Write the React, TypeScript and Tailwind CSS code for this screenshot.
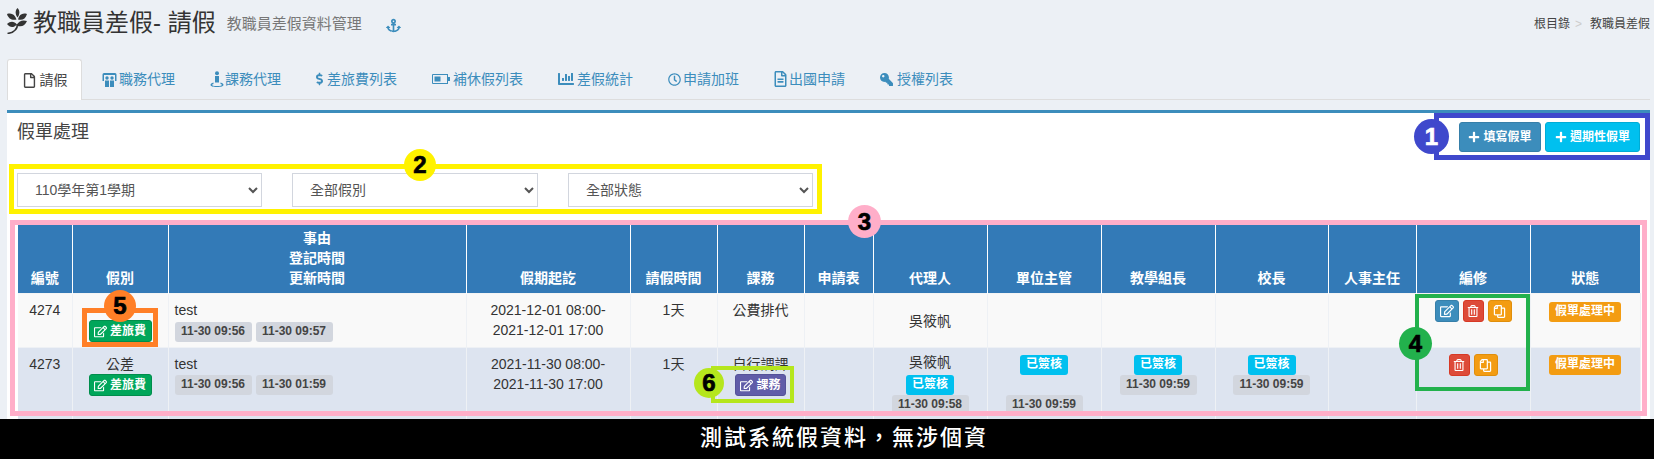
import type { ReactNode } from "react";
import {
  FaAnchor,
  FaChartBar,
  FaDollarSign,
  FaKey,
  FaPlus,
  FaRegClock,
  FaRegCopy,
  FaRegEdit,
  FaRegFile,
  FaRegFileAlt,
  FaRegTrashAlt,
} from "react-icons/fa";

function GrainIcon() {
  return (
    <svg viewBox="0 0 20 26" className="h-[26px] w-[20px] text-[#333]" fill="currentColor">
      <path d="M10.500 0c2.500 2.500 2.500 6 0 9.500-2.500-3.500-2.500-7 0-9.500z" />
      <path d="M0 6c4.500-1.500 8 .5 9.500 5.500C5 12.500 1.500 11 0 6z" />
      <path d="M20 6c-4.500-1.500-8 .5-9 5.500 4.500 1 7.500-.5 9-5.500z" />
      <path d="M0 16c3.500-3 7-3 10 .5-3.500 3.500-7 3.500-10-.5z" />
      <path d="M20 13c-4.500-1.500-8.500 0-10.500 4.500C14 19.500 18 18 20 13z" />
      <path d="M10.500 16c0 5-3.500 8.500-10 9.500" fill="none" stroke="currentColor" strokeWidth="1.600" />
    </svg>
  );
}

function DeputyIcon() {
  return (
    <svg viewBox="0 0 15 15" className="h-[15px] w-[15px]" fill="currentColor">
      <path d="M2 1h11a1.500 1.500 0 0 1 1.500 1.500V9h-1.500V3H2v6H.5V2.500A1.500 1.500 0 0 1 2 1z" />
      <circle cx="5" cy="6" r="1.700" />
      <circle cx="10" cy="6" r="1.700" />
      <path d="M3 8.500h4V15H3zM8 8.500h4V15H8z" />
    </svg>
  );
}

function CourseIcon() {
  return (
    <svg viewBox="0 0 14 16" className="h-[16px] w-[14px]" fill="currentColor">
      <circle cx="7" cy="2.300" r="2" />
      <path d="M5 5h4v6.500H5z" />
      <path d="M3.500 11.500c-2 .5-3 1.500-3 2.500s2 2 6.500 2 6.500-1 6.500-2-1-2-3-2.500v1.500c1 .2 1.500.6 1.500 1s-1.500 1-5 1-5-.5-5-1 .5-.8 1.500-1z" />
    </svg>
  );
}

function BatteryIcon() {
  return (
    <svg viewBox="0 0 18 10" className="h-[10px] w-[18px]" fill="currentColor">
      <path d="M1 0h15v3h2v4h-2v3H1a1 1 0 0 1-1-1V1a1 1 0 0 1 1-1zm0 1v8h14V1z" />
      <path d="M2.500 2.500h6v5h-6z" />
    </svg>
  );
}

const tabs: { label: string; icon: ReactNode; box: string }[] = [
  { label: "職務代理", icon: <DeputyIcon />, box: "w-[17px]" },
  { label: "課務代理", icon: <CourseIcon />, box: "w-[15px]" },
  { label: "差旅費列表", icon: <FaDollarSign className="h-[14px] w-[7px]" />, box: "w-[11px]" },
  { label: "補休假列表", icon: <BatteryIcon />, box: "w-[21px]" },
  { label: "差假統計", icon: <FaChartBar size={16} />, box: "w-[19px]" },
  { label: "申請加班", icon: <FaRegClock size={13} />, box: "w-[15px]" },
  { label: "出國申請", icon: <FaRegFileAlt className="h-[16px] w-[13px]" />, box: "w-[15px]" },
  { label: "授權列表", icon: <FaKey size={13} className="-scale-x-100" />, box: "w-[17px]" },
];

function TimeLabel({ children }: { children: ReactNode }) {
  return (
    <span className="mx-auto block h-[20px] w-[77px] rounded-[3px] bg-[#d2d6de] text-center text-[12px] leading-[18px] font-bold text-[#444]">
      {children}
    </span>
  );
}

function SignedBadge() {
  return (
    <span className="mx-auto block h-[20px] w-[48px] rounded-[3px] bg-[#00c0ef] text-center text-[12px] leading-[18px] font-bold text-white">
      已簽核
    </span>
  );
}

function StatusBadge() {
  return (
    <span className="mx-auto block h-[20px] w-[72px] rounded-[3px] bg-[#f39c12] text-center text-[12px] leading-[18px] font-bold text-white">
      假單處理中
    </span>
  );
}

function TravelButton() {
  return (
    <span className="mx-auto flex h-[22px] w-[63px] items-center justify-center gap-[3px] rounded-[3px] border border-[#008d4c] bg-[#00a65a] text-[12px] font-bold text-white">
      <FaRegEdit size={13} />
      差旅費
    </span>
  );
}

function ActionButtons({ edit }: { edit?: boolean }) {
  return (
    <div className="flex justify-center gap-[4px]">
      {edit && (
        <span className="flex h-[22px] w-[24px] items-center justify-center rounded-[3px] border border-[#367fa9] bg-[#3c8dbc] text-white">
          <FaRegEdit size={14} />
        </span>
      )}
      <span className="flex h-[22px] w-[21px] items-center justify-center rounded-[3px] border border-[#d73925] bg-[#dd4b39] text-white">
        <FaRegTrashAlt size={12} />
      </span>
      <span className="flex h-[22px] w-[24px] items-center justify-center rounded-[3px] border border-[#e08e0b] bg-[#f39c12] text-white">
        <FaRegCopy size={13} className="-scale-x-100" />
      </span>
    </div>
  );
}

const headers: { label: ReactNode; width: string }[] = [
  { label: "編號", width: "w-[54px]" },
  { label: "假別", width: "w-[96px]" },
  {
    label: (
      <>
        事由
        <br />
        登記時間
        <br />
        更新時間
      </>
    ),
    width: "w-[298px]",
  },
  { label: "假期起訖", width: "w-[164px]" },
  { label: "請假時間", width: "w-[87px]" },
  { label: "課務", width: "w-[87px]" },
  { label: "申請表", width: "w-[69px]" },
  { label: "代理人", width: "w-[114px]" },
  { label: "單位主管", width: "w-[114px]" },
  { label: "教學組長", width: "w-[114px]" },
  { label: "校長", width: "w-[113px]" },
  { label: "人事主任", width: "w-[88px]" },
  { label: "編修", width: "w-[114px]" },
  { label: "狀態", width: "w-[110px]" },
];

function Cell({ children, left }: { children?: ReactNode; left?: boolean }) {
  return (
    <td
      className={`border-r border-[#eef1f5] pt-[6px] pb-[5px] align-top ${
        left ? "pl-[6px] text-left" : "text-center"
      }`}
    >
      {children}
    </td>
  );
}

function Mark({ className, children }: { className: string; children: ReactNode }) {
  return (
    <div
      className={`absolute flex items-center justify-center rounded-full text-[24px] leading-none font-bold [-webkit-text-stroke:0.7px_currentColor] ${className}`}
    >
      {children}
    </div>
  );
}

export default function App() {
  return (
    <div className="relative h-[459px] w-[1654px] overflow-hidden bg-[#ecf0f5] [font-family:'Liberation_Sans','Noto_Sans_CJK_TC',sans-serif] text-[14px] leading-[20px] text-[#333]">
      <header className="flex h-[59px] items-start pt-[8px] pr-[4px] pl-[7px]">
        <GrainIcon />
        <h1 className="ml-[6px] text-[24px] leading-[30px]">教職員差假- 請假</h1>
        <span className="mt-[6px] ml-[11px] text-[15px] leading-[20px] text-[#777]">教職員差假資料管理</span>
        <FaAnchor size={15} className="mt-[10px] ml-[24px] text-[#3c8dbc]" />
        <div className="ml-auto flex gap-[5px] pt-[7px] text-[12px] leading-[18px] text-[#444]">
          <span>根目錄</span>
          <span className="mr-[3px] text-[#ccc]">&gt;</span>
          <span>教職員差假</span>
        </div>
      </header>

      <nav className="mr-[4px] ml-[7px] flex h-[41px] gap-[5px] border-b border-[#ddd]">
        <div className="flex h-[41px] w-[75px] items-center justify-center gap-[3px] rounded-t-[3px] border border-b-0 border-[#ddd] bg-white text-[#444]">
          <FaRegFile size={15} />
          請假
        </div>
        {tabs.map((tab) => (
          <div key={tab.label} className="flex h-[40px] items-center px-[15px] text-[#3c8dbc]">
            <span className={`flex-none ${tab.box}`}>{tab.icon}</span>
            {tab.label}
          </div>
        ))}
      </nav>

      <section className="mt-[10px] mr-[4px] ml-[7px] h-[400px] border-t-[3px] border-[#3c8dbc] bg-white">
        <div className="flex h-[60px] items-start justify-between pr-[10px] pl-[10px]">
          <h3 className="mt-[7px] text-[18px] leading-[24px] text-[#444]">假單處理</h3>
          <div className="mt-[9px] flex gap-[4px] text-[12px] font-bold text-white">
            <span className="flex h-[30px] w-[82px] items-center justify-center gap-[3px] rounded-[3px] border border-[#367fa9] bg-[#3c8dbc]">
              <FaPlus size={12} />
              填寫假單
            </span>
            <span className="flex h-[30px] w-[95px] items-center justify-center gap-[3px] rounded-[3px] border border-[#00acd6] bg-[#00c0ef]">
              <FaPlus size={12} />
              週期性假單
            </span>
          </div>
        </div>

        <div className="ml-[10px] flex gap-[30px]">
          <select className="h-[34px] w-[245px] border border-[#d2d6de] bg-white pl-[13px] text-[#555]">
            <option>110學年第1學期</option>
          </select>
          <select className="h-[34px] w-[246px] border border-[#d2d6de] bg-white pl-[13px] text-[#555]">
            <option>全部假別</option>
          </select>
          <select className="h-[34px] w-[245px] border border-[#d2d6de] bg-white pl-[13px] text-[#555]">
            <option>全部狀態</option>
          </select>
        </div>

        <table className="mt-[18px] ml-[11px] w-[1622px] table-fixed border-collapse">
          <colgroup>
            {headers.map((h, i) => (
              <col key={i} className={h.width} />
            ))}
          </colgroup>
          <thead>
            <tr className="bg-[#337ab7] text-white">
              {headers.map((h, i) => (
                <th
                  key={i}
                  className="border-r border-white pt-[3px] pb-[5px] text-center align-bottom font-bold last:border-r-0"
                >
                  {h.label}
                </th>
              ))}
            </tr>
          </thead>
          <tbody>
            <tr className="h-[54px] border-t border-[#f4f4f4] bg-[#f9f9f9]">
              <Cell>4274</Cell>
              <Cell>
                <div className="h-[20px]" />
                <TravelButton />
              </Cell>
              <Cell left>
                <div>test</div>
                <div className="mt-[2px] flex gap-[4px]">
                  <div>
                    <TimeLabel>11-30 09:56</TimeLabel>
                  </div>
                  <div>
                    <TimeLabel>11-30 09:57</TimeLabel>
                  </div>
                </div>
              </Cell>
              <Cell>
                2021-12-01 08:00-
                <br />
                2021-12-01 17:00
              </Cell>
              <Cell>1天</Cell>
              <Cell>公費排代</Cell>
              <Cell />
              <Cell>
                <div className="mt-[11px]">吳筱帆</div>
              </Cell>
              <Cell />
              <Cell />
              <Cell />
              <Cell />
              <Cell>
                <ActionButtons edit />
              </Cell>
              <Cell>
                <div className="mt-[2px]">
                  <StatusBadge />
                </div>
              </Cell>
            </tr>
            <tr className="border-t border-[#eef1f5] bg-[#dde4f0]">
              <Cell>4273</Cell>
              <Cell>
                <div>公差</div>
                <TravelButton />
              </Cell>
              <Cell left>
                <div>test</div>
                <div className="mt-[1px] flex gap-[4px]">
                  <div>
                    <TimeLabel>11-30 09:56</TimeLabel>
                  </div>
                  <div>
                    <TimeLabel>11-30 01:59</TimeLabel>
                  </div>
                </div>
              </Cell>
              <Cell>
                2021-11-30 08:00-
                <br />
                2021-11-30 17:00
              </Cell>
              <Cell>1天</Cell>
              <Cell>
                <div>自行調課</div>
                <span className="mx-auto flex h-[22px] w-[51px] items-center justify-center gap-[3px] rounded-[3px] border border-[#555299] bg-[#605ca8] text-[12px] font-bold text-white">
                  <FaRegEdit size={13} />
                  課務
                </span>
              </Cell>
              <Cell />
              <Cell>
                <div className="-mt-[2px]">吳筱帆</div>
                <div className="mt-[3px]">
                  <SignedBadge />
                </div>
                <TimeLabel>11-30 09:58</TimeLabel>
              </Cell>
              <Cell>
                <div className="mt-[1px]">
                  <SignedBadge />
                </div>
                <div className="h-[20px]" />
                <TimeLabel>11-30 09:59</TimeLabel>
              </Cell>
              <Cell>
                <div className="mt-[1px]">
                  <SignedBadge />
                </div>
                <TimeLabel>11-30 09:59</TimeLabel>
              </Cell>
              <Cell>
                <div className="mt-[1px]">
                  <SignedBadge />
                </div>
                <TimeLabel>11-30 09:59</TimeLabel>
              </Cell>
              <Cell />
              <Cell>
                <ActionButtons />
              </Cell>
              <Cell>
                <div className="mt-[1px]">
                  <StatusBadge />
                </div>
              </Cell>
            </tr>
          </tbody>
        </table>
      </section>

      {/* annotation frames drawn on top of the screenshot */}
      <div className="absolute top-[113px] left-[1434px] h-[47px] w-[216px] border-[5px] border-[#3f48cc]" />
      <div className="absolute top-[164px] left-[9px] h-[50px] w-[813px] border-[5px] border-[#fff200]" />
      <div className="absolute top-[220px] left-[10px] h-[196px] w-[1637px] border-[5px] border-[#ffaec9]" />
      <div className="absolute top-[294px] left-[1415px] h-[97px] w-[115px] border-[4px] border-[#22b14c]" />
      <div className="absolute top-[308px] left-[82px] h-[39px] w-[76px] border-[5px] border-[#ff7f27]" />
      <div className="absolute top-[366px] left-[711px] h-[37px] w-[83px] border-[4px] border-[#b5e61d]" />

      <Mark className="top-[119px] left-[1414px] h-[35px] w-[35px] bg-[#3f48cc] text-white">1</Mark>
      <Mark className="top-[149px] left-[404px] h-[32px] w-[32px] bg-[#fff200] text-black">2</Mark>
      <Mark className="top-[205px] left-[848px] h-[33px] w-[33px] bg-[#ffaec9] text-black">3</Mark>
      <Mark className="top-[327px] left-[1399px] h-[33px] w-[33px] bg-[#22b14c] text-black">4</Mark>
      <Mark className="top-[290px] left-[104px] h-[32px] w-[32px] bg-[#ff7f27] text-black">5</Mark>
      <Mark className="top-[368px] left-[694px] h-[30px] w-[30px] bg-[#b5e61d] text-black">6</Mark>

      <div className="absolute inset-x-0 bottom-0 flex h-[40px] items-center justify-center bg-black pb-[2px] pl-[34px] text-[22px] font-medium tracking-[2px] text-white">
        測試系統假資料，無涉個資
      </div>
    </div>
  );
}
